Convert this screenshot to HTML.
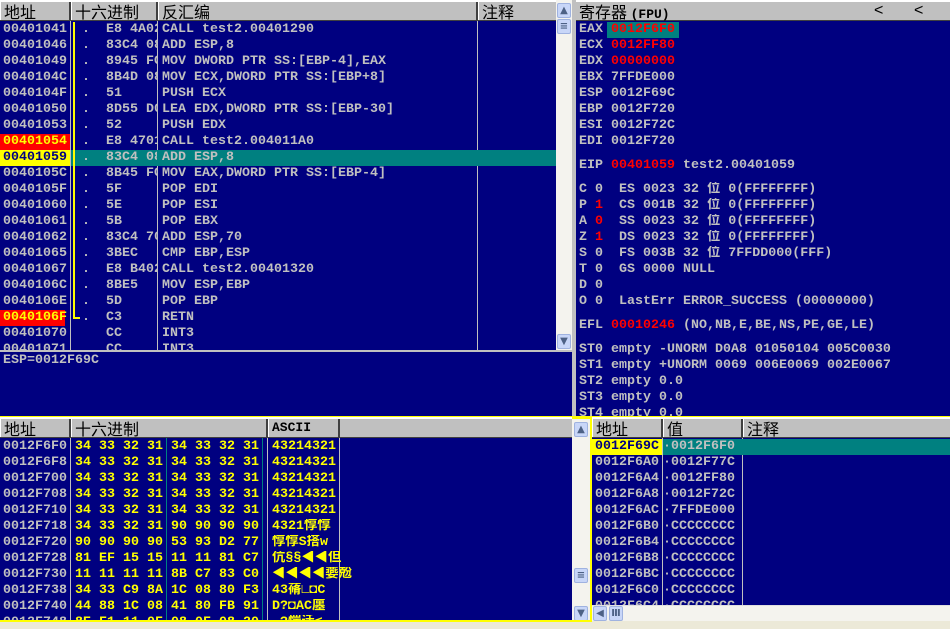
<!DOCTYPE html>
<html><head><meta charset="utf-8"><style>
*{margin:0;padding:0;box-sizing:border-box}
body{width:950px;height:629px;overflow:hidden;background:#ece9d8;position:relative;font-family:"Liberation Mono","Noto Sans CJK SC",monospace;font-weight:bold;font-size:13.33px;color:#c0c0c0}
.a{position:absolute}
.blue{background:#000080}
.hd{position:absolute;background:#c0c0c0;color:#000;font-weight:normal;font-family:"Noto Sans CJK SC","WenQuanYi Zen Hei",sans-serif;font-size:16px;line-height:18px;border-top:2px solid #fff;border-bottom:1px solid #404040}
.hc{position:absolute;top:0;height:18px;border-right:2px solid #404040;border-left:1px solid #fff;padding-left:3px;overflow:hidden}
.r{position:absolute;height:16px;line-height:16px;white-space:pre;overflow:hidden}
.vl{position:absolute;width:1px;background:#c0c0c0}
.sb{position:absolute;background:#f4f3ee}
.btn{position:absolute;width:14px;height:15px;background:#c8d6f8;border:1px solid #9fb2e0;border-radius:2px;color:#4d6185;font-size:10px;line-height:13px;text-align:center;font-family:"DejaVu Sans",sans-serif}
.y{color:#ffff00}.rd{color:#ff0000}
</style></head><body>

<!-- disasm pane -->
<div class="a blue" style="left:0;top:21px;width:556px;height:329px"></div>
<div class="hd" style="left:0;top:0;width:556px;height:21px">
<div class="hc" style="left:0;width:71px">地址</div>
<div class="hc" style="left:71px;width:87px">十六进制</div>
<div class="hc" style="left:158px;width:320px">反汇编</div>
<div class="hc" style="left:478px;width:78px;border-right:none">注释</div>
</div>
<div class="vl" style="left:70px;top:21px;height:329px"></div>
<div class="vl" style="left:157px;top:21px;height:329px"></div>
<div class="vl" style="left:477px;top:21px;height:329px"></div>
<div class="a" style="left:71px;top:150px;width:485px;height:16px;background:#008080"></div>
<div class="a" style="left:0;top:134px;width:70px;height:16px;background:#ff0000"></div>
<div class="a" style="left:0;top:150px;width:70px;height:16px;background:#ffff00"></div>
<div class="a" style="left:0;top:310px;width:65px;height:16px;background:#ff0000"></div>
<div class="a" style="left:73px;top:22px;width:2px;height:297px;background:#ffff00"></div>
<div class="a" style="left:73px;top:317px;width:7px;height:2px;background:#ffff00"></div>

<div style="position:absolute;left:0;top:22px;width:556px;height:328px;overflow:hidden">
<div class="r" style="top:0;left:3px">00401041</div><div class="r" style="top:0;left:82px;width:75px">.  E8 4A020000</div><div class="r" style="top:0;left:162px">CALL test2.00401290</div>
<div class="r" style="top:16px;left:3px">00401046</div><div class="r" style="top:16px;left:82px;width:75px">.  83C4 08</div><div class="r" style="top:16px;left:162px">ADD ESP,8</div>
<div class="r" style="top:32px;left:3px">00401049</div><div class="r" style="top:32px;left:82px;width:75px">.  8945 FC</div><div class="r" style="top:32px;left:162px">MOV DWORD PTR SS:[EBP-4],EAX</div>
<div class="r" style="top:48px;left:3px">0040104C</div><div class="r" style="top:48px;left:82px;width:75px">.  8B4D 08</div><div class="r" style="top:48px;left:162px">MOV ECX,DWORD PTR SS:[EBP+8]</div>
<div class="r" style="top:64px;left:3px">0040104F</div><div class="r" style="top:64px;left:82px;width:75px">.  51</div><div class="r" style="top:64px;left:162px">PUSH ECX</div>
<div class="r" style="top:80px;left:3px">00401050</div><div class="r" style="top:80px;left:82px;width:75px">.  8D55 D0</div><div class="r" style="top:80px;left:162px">LEA EDX,DWORD PTR SS:[EBP-30]</div>
<div class="r" style="top:96px;left:3px">00401053</div><div class="r" style="top:96px;left:82px;width:75px">.  52</div><div class="r" style="top:96px;left:162px">PUSH EDX</div>
<div class="r y" style="top:112px;left:3px">00401054</div><div class="r" style="top:112px;left:82px;width:75px">.  E8 47010000</div><div class="r" style="top:112px;left:162px">CALL test2.004011A0</div>
<div class="r" style="top:128px;left:3px;color:#000080">00401059</div><div class="r" style="top:128px;left:82px;width:75px">.  83C4 08</div><div class="r" style="top:128px;left:162px">ADD ESP,8</div>
<div class="r" style="top:144px;left:3px">0040105C</div><div class="r" style="top:144px;left:82px;width:75px">.  8B45 FC</div><div class="r" style="top:144px;left:162px">MOV EAX,DWORD PTR SS:[EBP-4]</div>
<div class="r" style="top:160px;left:3px">0040105F</div><div class="r" style="top:160px;left:82px;width:75px">.  5F</div><div class="r" style="top:160px;left:162px">POP EDI</div>
<div class="r" style="top:176px;left:3px">00401060</div><div class="r" style="top:176px;left:82px;width:75px">.  5E</div><div class="r" style="top:176px;left:162px">POP ESI</div>
<div class="r" style="top:192px;left:3px">00401061</div><div class="r" style="top:192px;left:82px;width:75px">.  5B</div><div class="r" style="top:192px;left:162px">POP EBX</div>
<div class="r" style="top:208px;left:3px">00401062</div><div class="r" style="top:208px;left:82px;width:75px">.  83C4 70</div><div class="r" style="top:208px;left:162px">ADD ESP,70</div>
<div class="r" style="top:224px;left:3px">00401065</div><div class="r" style="top:224px;left:82px;width:75px">.  3BEC</div><div class="r" style="top:224px;left:162px">CMP EBP,ESP</div>
<div class="r" style="top:240px;left:3px">00401067</div><div class="r" style="top:240px;left:82px;width:75px">.  E8 B4020000</div><div class="r" style="top:240px;left:162px">CALL test2.00401320</div>
<div class="r" style="top:256px;left:3px">0040106C</div><div class="r" style="top:256px;left:82px;width:75px">.  8BE5</div><div class="r" style="top:256px;left:162px">MOV ESP,EBP</div>
<div class="r" style="top:272px;left:3px">0040106E</div><div class="r" style="top:272px;left:82px;width:75px">.  5D</div><div class="r" style="top:272px;left:162px">POP EBP</div>
<div class="r y" style="top:288px;left:3px">0040106F</div><div class="r" style="top:288px;left:82px;width:75px">.  C3</div><div class="r" style="top:288px;left:162px">RETN</div>
<div class="r" style="top:304px;left:3px">00401070</div><div class="r" style="top:304px;left:82px;width:75px">   CC</div><div class="r" style="top:304px;left:162px">INT3</div>
<div class="r" style="top:320px;left:3px">00401071</div><div class="r" style="top:320px;left:82px;width:75px">   CC</div><div class="r" style="top:320px;left:162px">INT3</div>
</div>
<div class="sb" style="left:556px;top:0;width:16px;height:350px"></div>
<div class="btn" style="left:557px;top:3px">▲</div>
<div class="btn" style="left:557px;top:19px">≡</div>
<div class="btn" style="left:557px;top:334px">▼</div>
<div class="a" style="left:0;top:350px;width:572px;height:2px;background:#c0c0c0"></div>

<!-- info pane -->
<div class="a blue" style="left:0;top:352px;width:572px;height:64px"></div>
<div class="r" style="left:3px;top:353px">ESP=0012F69C</div>

<!-- register pane -->
<div class="a" style="left:572px;top:0;width:4px;height:417px;background:#c0c0c0"></div>
<div class="a blue" style="left:576px;top:21px;width:374px;height:396px"></div>
<div class="hd" style="left:576px;top:0;width:374px;height:21px;padding-left:3px">寄存器 <span style="font-family:'Liberation Mono',monospace;font-weight:bold;font-size:13px">(FPU)</span>
<span class="a" style="left:298px;top:0;font-family:'Liberation Sans',sans-serif">&lt;</span><span class="a" style="left:338px;top:0;font-family:'Liberation Sans',sans-serif">&lt;</span></div>
<div class="a" style="left:607px;top:22px;width:72px;height:16px;background:#008080"></div>
<div style="position:absolute;left:579px;top:22px;width:371px;height:395px;overflow:hidden">
<div class="r" style="top:0">EAX <span class="rd">0012F6F0</span></div>
<div class="r" style="top:16px">ECX <span class="rd">0012FF80</span></div>
<div class="r" style="top:32px">EDX <span class="rd">00000000</span></div>
<div class="r" style="top:48px">EBX 7FFDE000</div>
<div class="r" style="top:64px">ESP 0012F69C</div>
<div class="r" style="top:80px">EBP 0012F720</div>
<div class="r" style="top:96px">ESI 0012F72C</div>
<div class="r" style="top:112px">EDI 0012F720</div>
<div class="r" style="top:136px">EIP <span class="rd">00401059</span> test2.00401059</div>
<div class="r" style="top:160px">C 0  ES 0023 32 位 0(FFFFFFFF)</div>
<div class="r" style="top:176px">P <span class="rd">1</span>  CS 001B 32 位 0(FFFFFFFF)</div>
<div class="r" style="top:192px">A <span class="rd">0</span>  SS 0023 32 位 0(FFFFFFFF)</div>
<div class="r" style="top:208px">Z <span class="rd">1</span>  DS 0023 32 位 0(FFFFFFFF)</div>
<div class="r" style="top:224px">S 0  FS 003B 32 位 7FFDD000(FFF)</div>
<div class="r" style="top:240px">T 0  GS 0000 NULL</div>
<div class="r" style="top:256px">D 0</div>
<div class="r" style="top:272px">O 0  LastErr ERROR_SUCCESS (00000000)</div>
<div class="r" style="top:296px">EFL <span class="rd">00010246</span> (NO,NB,E,BE,NS,PE,GE,LE)</div>
<div class="r" style="top:320px">ST0 empty -UNORM D0A8 01050104 005C0030</div>
<div class="r" style="top:336px">ST1 empty +UNORM 0069 006E0069 002E0067</div>
<div class="r" style="top:352px">ST2 empty 0.0</div>
<div class="r" style="top:368px">ST3 empty 0.0</div>
<div class="r" style="top:384px">ST4 empty 0.0</div>
</div>

<!-- yellow separators -->
<div class="a" style="left:0;top:416px;width:950px;height:3px;background:#ffff00"></div>

<!-- dump pane -->
<div class="a blue" style="left:0;top:438px;width:572px;height:182px"></div>
<div class="hd" style="left:0;top:417px;width:572px;height:21px">
<div class="hc" style="left:0;width:71px">地址</div>
<div class="hc" style="left:71px;width:197px">十六进制</div>
<div class="hc" style="left:268px;width:72px;font-family:'Liberation Mono',monospace;font-weight:bold;font-size:13px">ASCII</div>
</div>
<div class="vl" style="left:70px;top:438px;height:182px"></div>
<div class="vl" style="left:166px;top:438px;height:182px;background:#008080"></div>
<div class="vl" style="left:262px;top:438px;height:182px;background:#008080"></div>
<div class="vl" style="left:267px;top:438px;height:182px"></div>
<div class="vl" style="left:339px;top:438px;height:182px"></div>
<div style="position:absolute;left:0;top:439px;width:572px;height:181px;overflow:hidden;font-family:'Liberation Mono','Noto Sans CJK SC',monospace">
<div class="r" style="top:0;left:3px">0012F6F0</div><div class="r y" style="top:0;left:75px">34 33 32 31 34 33 32 31</div><div class="r y" style="top:0;left:272px">43214321</div>
<div class="r" style="top:16px;left:3px">0012F6F8</div><div class="r y" style="top:16px;left:75px">34 33 32 31 34 33 32 31</div><div class="r y" style="top:16px;left:272px">43214321</div>
<div class="r" style="top:32px;left:3px">0012F700</div><div class="r y" style="top:32px;left:75px">34 33 32 31 34 33 32 31</div><div class="r y" style="top:32px;left:272px">43214321</div>
<div class="r" style="top:48px;left:3px">0012F708</div><div class="r y" style="top:48px;left:75px">34 33 32 31 34 33 32 31</div><div class="r y" style="top:48px;left:272px">43214321</div>
<div class="r" style="top:64px;left:3px">0012F710</div><div class="r y" style="top:64px;left:75px">34 33 32 31 34 33 32 31</div><div class="r y" style="top:64px;left:272px">43214321</div>
<div class="r" style="top:80px;left:3px">0012F718</div><div class="r y" style="top:80px;left:75px">34 33 32 31 90 90 90 90</div><div class="r y" style="top:80px;left:272px">4321惇惇</div>
<div class="r" style="top:96px;left:3px">0012F720</div><div class="r y" style="top:96px;left:75px">90 90 90 90 53 93 D2 77</div><div class="r y" style="top:96px;left:272px">惇惇S搭w</div>
<div class="r" style="top:112px;left:3px">0012F728</div><div class="r y" style="top:112px;left:75px">81 EF 15 15 11 11 81 C7</div><div class="r y" style="top:112px;left:272px">伉§§◀◀但</div>
<div class="r" style="top:128px;left:3px">0012F730</div><div class="r y" style="top:128px;left:75px">11 11 11 11 8B C7 83 C0</div><div class="r y" style="top:128px;left:272px">◀◀◀◀嬊兝</div>
<div class="r" style="top:144px;left:3px">0012F738</div><div class="r y" style="top:144px;left:75px">34 33 C9 8A 1C 08 80 F3</div><div class="r y" style="top:144px;left:272px">43蓨∟◘C</div>
<div class="r" style="top:160px;left:3px">0012F740</div><div class="r y" style="top:160px;left:75px">44 88 1C 08 41 80 FB 91</div><div class="r y" style="top:160px;left:272px">D?◘AC廛</div>
<div class="r" style="top:176px;left:3px">0012F748</div><div class="r y" style="top:176px;left:75px">8E F1 11 0F 08 0F 08 20</div><div class="r y" style="top:176px;left:272px">.?惴迁&lt;</div>
</div>
<div class="sb" style="left:572px;top:419px;width:18px;height:202px"></div>
<div class="btn" style="left:574px;top:422px">▲</div>
<div class="btn" style="left:574px;top:568px">≡</div>
<div class="btn" style="left:574px;top:606px">▼</div>

<!-- stack pane -->
<div class="a" style="left:590px;top:419px;width:2px;height:203px;background:#ffff00"></div>
<div class="a blue" style="left:592px;top:438px;width:358px;height:167px"></div>
<div class="hd" style="left:592px;top:417px;width:358px;height:21px">
<div class="hc" style="left:0;width:71px">地址</div>
<div class="hc" style="left:71px;width:80px">值</div>
<div class="hc" style="left:151px;width:207px;border-right:none">注释</div>
</div>
<div class="vl" style="left:662px;top:438px;height:167px"></div>
<div class="vl" style="left:742px;top:438px;height:167px"></div>
<div class="a" style="left:592px;top:439px;width:70px;height:16px;background:#ffff00"></div>
<div class="a" style="left:663px;top:439px;width:287px;height:16px;background:#008080"></div>
<div style="position:absolute;left:592px;top:439px;width:358px;height:166px;overflow:hidden">
<div class="r" style="top:0;left:3px;color:#000080">0012F69C</div><div class="r" style="top:0;left:71px">·0012F6F0</div>
<div class="r" style="top:16px;left:3px">0012F6A0</div><div class="r" style="top:16px;left:71px">·0012F77C</div>
<div class="r" style="top:32px;left:3px">0012F6A4</div><div class="r" style="top:32px;left:71px">·0012FF80</div>
<div class="r" style="top:48px;left:3px">0012F6A8</div><div class="r" style="top:48px;left:71px">·0012F72C</div>
<div class="r" style="top:64px;left:3px">0012F6AC</div><div class="r" style="top:64px;left:71px">·7FFDE000</div>
<div class="r" style="top:80px;left:3px">0012F6B0</div><div class="r" style="top:80px;left:71px">·CCCCCCCC</div>
<div class="r" style="top:96px;left:3px">0012F6B4</div><div class="r" style="top:96px;left:71px">·CCCCCCCC</div>
<div class="r" style="top:112px;left:3px">0012F6B8</div><div class="r" style="top:112px;left:71px">·CCCCCCCC</div>
<div class="r" style="top:128px;left:3px">0012F6BC</div><div class="r" style="top:128px;left:71px">·CCCCCCCC</div>
<div class="r" style="top:144px;left:3px">0012F6C0</div><div class="r" style="top:144px;left:71px">·CCCCCCCC</div>
<div class="r" style="top:160px;left:3px">0012F6C4</div><div class="r" style="top:160px;left:71px">·CCCCCCCC</div>
</div>
<div class="sb" style="left:592px;top:605px;width:358px;height:16px;border-top:1px solid #e0e0e0"></div>
<div class="btn" style="left:593px;top:606px">◀</div>
<div class="btn" style="left:609px;top:606px">Ⅲ</div>

<div class="a" style="left:0;top:620px;width:592px;height:2px;background:#ffff00"></div>
<div class="a" style="left:0;top:622px;width:950px;height:7px;background:#ece9d8"></div>
</body></html>
